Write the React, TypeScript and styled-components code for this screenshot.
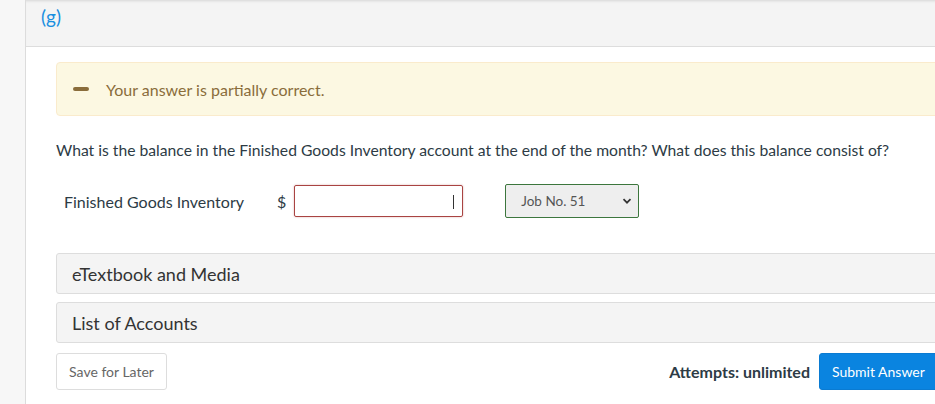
import React from "react";
import styled, { createGlobalStyle } from "styled-components";

const Global = createGlobalStyle`
  html, body {
    margin: 0;
    padding: 0;
    background: #ffffff;
    overflow: hidden;
  }
  * { box-sizing: border-box; }
  body {
    font-family: Lato, "Open Sans", sans-serif;
    color: #2d3b45;
  }
`;

export default function App() {
  return (
    <Page>
      <Global />
      <Gutter />
      <Main>
        <Header>
          <PartLabel>(g)</PartLabel>
        </Header>
        <Body>
          <Alert>
            <Dash />
            <AlertText>Your answer is partially correct.</AlertText>
          </Alert>
          <Question>
            What is the balance in the Finished Goods Inventory account at the end of the month? What does this balance consist of?
          </Question>
          <Row>
            <FieldLabel>Finished Goods Inventory</FieldLabel>
            <Dollar>$</Dollar>
            <AmountInput>
              <Caret />
            </AmountInput>
            <Select>
              <SelectText>Job No. 51</SelectText>
              <svg width="10" height="10" viewBox="0 0 10 10">
                <path d="M1.5 3.2 L5 6.7 L8.5 3.2" fill="none" stroke="#333" strokeWidth="1.7" />
              </svg>
            </Select>
          </Row>
          <Panels>
            <Panel>eTextbook and Media</Panel>
            <Panel>List of Accounts</Panel>
          </Panels>
          <Footer>
            <SaveButton>Save for Later</SaveButton>
            <FooterRight>
              <Attempts>Attempts: unlimited</Attempts>
              <SubmitButton>Submit Answer</SubmitButton>
            </FooterRight>
          </Footer>
        </Body>
      </Main>
    </Page>
  );
}

const Page = styled.div`
  display: flex;
  width: 935px;
  height: 404px;
  overflow: hidden;
`;

const Gutter = styled.div`
  width: 26px;
  flex-shrink: 0;
  background: #f7f7f7;
  border-right: 1px solid #dcdcdc;
`;

const Main = styled.div`
  width: 930px;
  flex-shrink: 0;
  display: flex;
  flex-direction: column;
`;

const Header = styled.div`
  height: 47px;
  background: #f4f4f4;
  border-bottom: 1px solid #dddddd;
  box-shadow: inset 0 3px 3px -2px rgba(0, 0, 0, 0.12);
  padding: 4px 0 0 15px;
`;

const PartLabel = styled.div`
  font-size: 19px;
  color: #1a8fe0;
  line-height: 26px;
`;

const Body = styled.div`
  padding: 15px 0 0 30px;
`;

const Alert = styled.div`
  height: 54px;
  width: 920px;
  background: #fcf8e2;
  border: 1px solid #faebcc;
  border-radius: 4px;
  display: flex;
  align-items: center;
  padding-left: 16px;
`;

const Dash = styled.div`
  width: 16px;
  height: 4px;
  border-radius: 2px;
  background: #8a6d3b;
  margin-right: 17px;
`;

const AlertText = styled.span`
  font-size: 16px;
  color: #8a6d3b;
`;

const Question = styled.p`
  margin: 22px 0 0 0;
  font-size: 15.7px;
  line-height: 24px;
  color: #2d3b45;
`;

const Row = styled.div`
  display: flex;
  align-items: center;
  margin-top: 22px;
  padding-left: 8px;
  height: 34px;
`;

const FieldLabel = styled.span`
  font-size: 16px;
  color: #2d3b45;
  margin-right: 33px;
`;

const Dollar = styled.span`
  font-size: 16px;
  color: #2d3b45;
  margin-right: 8px;
`;

const AmountInput = styled.div`
  width: 169px;
  height: 32px;
  border: 1px solid #a94442;
  border-radius: 2px;
  box-shadow: 0 0 2px rgba(169, 68, 66, 0.45);
  position: relative;
  margin-right: 42px;
`;

const Caret = styled.div`
  position: absolute;
  left: 158px;
  top: 9px;
  width: 1px;
  height: 14px;
  background: #333;
`;

const Select = styled.div`
  width: 134px;
  height: 34px;
  background: #eeeeee;
  border: 1px solid #3c763d;
  border-radius: 2px;
  display: flex;
  align-items: center;
  justify-content: space-between;
  padding: 0 6px 0 15px;
`;

const SelectText = styled.span`
  font-size: 13.5px;
  color: #555;
`;

const Panels = styled.div`
  display: flex;
  flex-direction: column;
  gap: 8px;
  margin-top: 35px;
`;

const Panel = styled.div`
  height: 41px;
  width: 920px;
  background: #f4f4f4;
  border: 1px solid #dddddd;
  border-radius: 3px;
  padding-left: 15px;
  display: flex;
  align-items: center;
  font-size: 18px;
  color: #333;
`;

const Footer = styled.div`
  display: flex;
  justify-content: space-between;
  align-items: center;
  margin-top: 10px;
  width: 883px;
`;

const SaveButton = styled.button`
  height: 37px;
  width: 111px;
  background: #fff;
  border: 1px solid #dddddd;
  border-radius: 3px;
  font-family: Lato, sans-serif;
  font-size: 14px;
  color: #666;
  padding: 0;
`;

const FooterRight = styled.div`
  display: flex;
  align-items: center;
  gap: 9px;
`;

const Attempts = styled.span`
  font-weight: 700;
  font-size: 16px;
  color: #2d3b45;
`;

const SubmitButton = styled.button`
  height: 37px;
  width: 120px;
  background: #0a84e0;
  border: 1px solid #0a7bd2;
  border-radius: 3px;
  color: #fff;
  font-family: Lato, sans-serif;
  font-size: 14px;
  padding: 0 0 0 12px;
  text-align: left;
`;
